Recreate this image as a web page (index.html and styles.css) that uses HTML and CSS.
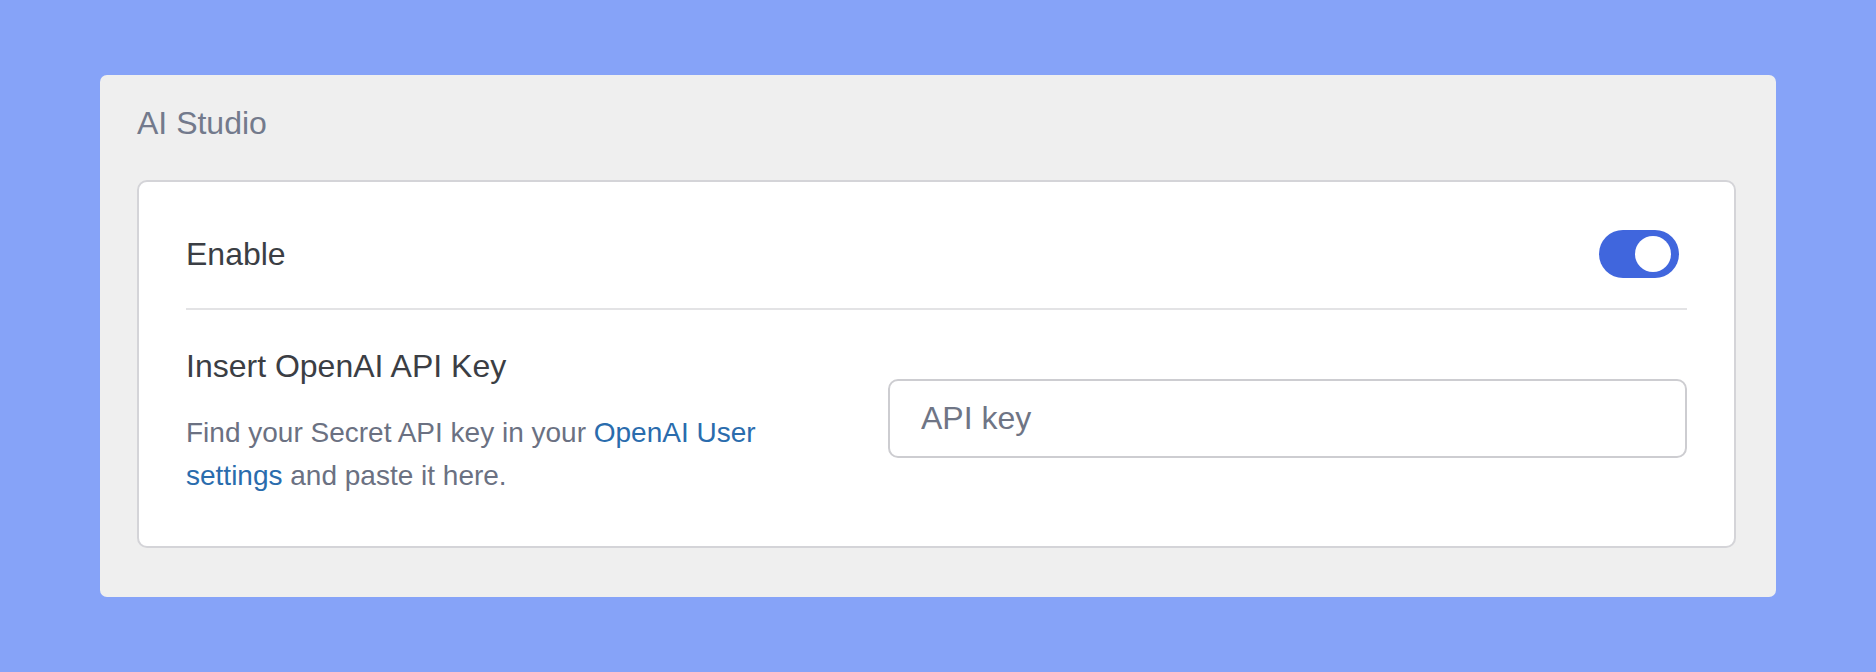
FILE: index.html
```html
<!DOCTYPE html>
<html lang="en">
<head>
  <meta charset="UTF-8">
  <title>AI Studio</title>
  <meta name="viewport" content="width=device-width, initial-scale=1.0">
  <link rel="stylesheet" href="styles.css">
</head>
<body>
  <div class="panel">
    <h2 class="panel-title">AI Studio</h2>

    <div class="card">
      <div class="row row-enable">
        <span class="label">Enable</span>
        <label class="toggle">
          <input type="checkbox" checked>
          <span class="knob"></span>
        </label>
      </div>

      <div class="row row-key">
        <div class="key-text">
          <div class="label">Insert OpenAI API Key</div>
          <p class="hint">Find your Secret API key in your <a href="#">OpenAI User settings</a> and paste it here.</p>
        </div>
        <input type="text" class="key-input" placeholder="API key">
      </div>
    </div>
  </div>
</body>
</html>
```

FILE: styles.css
```css
body {
  margin: 0;
  padding: 75px 100px;
  background: #86a3f8;
  font-family: "Liberation Sans", Arial, sans-serif;
  height: 672px;
  box-sizing: border-box;
}

.panel {
  background: #efefef;
  border-radius: 7px;
  padding: 30px 40px 49px 37px;
}

.panel-title {
  margin: 0 0 39px;
  font-size: 32px;
  line-height: 36px;
  font-weight: normal;
  color: #737a8c;
}

.card {
  background: #fff;
  border: 2px solid #d4d4d8;
  border-radius: 10px;
  padding: 48px 47px 49px 47px;
}

.row {
  display: flex;
  align-items: center;
}

.row-enable {
  justify-content: space-between;
  padding-bottom: 30px;
  border-bottom: 2px solid #e3e3e5;
}

.label {
  font-size: 32px;
  line-height: 37px;
  color: #3b3e44;
}

.toggle {
  width: 80px;
  height: 48px;
  box-sizing: border-box;
  border-radius: 24px;
  background: #4066dd;
  padding: 6px 8px;
  margin-right: 8px;
  display: flex;
  justify-content: flex-end;
  cursor: pointer;
}

.toggle input {
  display: none;
}

.knob {
  width: 36px;
  height: 36px;
  border-radius: 50%;
  background: #fff;
}

.row-key {
  padding-top: 38px;
  gap: 100px;
}

.key-text {
  flex: 1;
}

.hint {
  margin: 26px 0 0;
  font-size: 28px;
  line-height: 43px;
  color: #6b7182;
}

.hint a {
  color: #2a6cad;
  text-decoration: none;
}

.key-input {
  width: 799px;
  height: 79px;
  box-sizing: border-box;
  border: 2px solid #cdcdd1;
  border-radius: 10px;
  padding: 0 31px;
  font-family: inherit;
  font-size: 32px;
  color: #3b3e44;
  outline: none;
  margin-top: -8px;
}

.key-input::placeholder {
  color: #6f7585;
}
```
